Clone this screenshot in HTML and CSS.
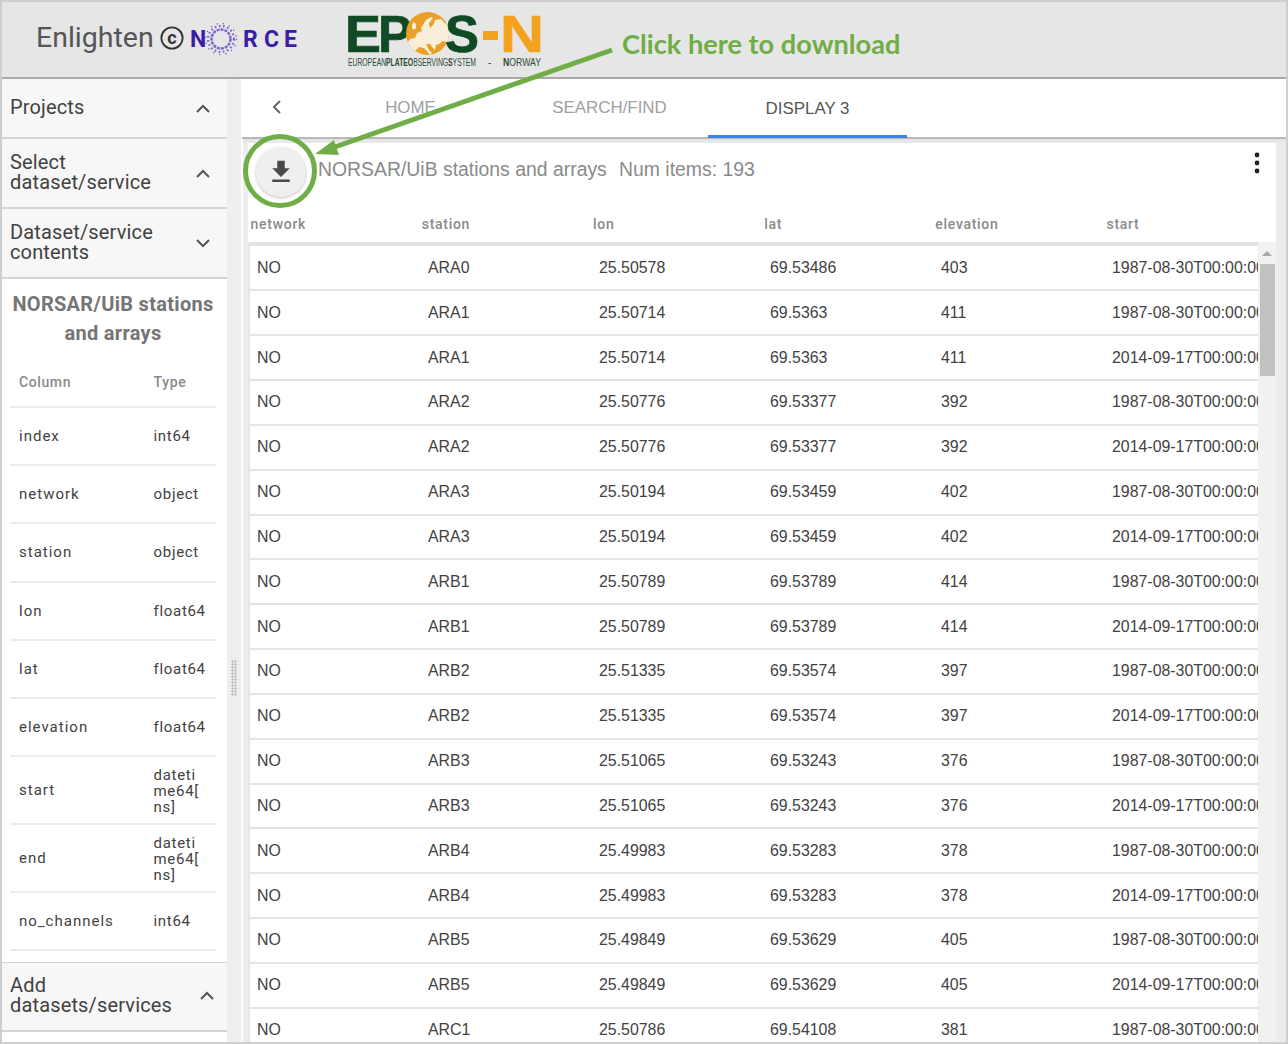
FILE: index.html
```html
<!DOCTYPE html>
<html lang="en">
<head>
<meta charset="utf-8">
<title>Enlighten</title>
<link rel="stylesheet" href="styles.css">
</head>
<body>
<div class="app">
  <header class="topbar">
    <span class="brand">Enlighten</span>
    <svg class="copy" viewBox="0 0 24 24" width="24" height="24"><circle cx="12" cy="12" r="10.6" fill="none" stroke="#333" stroke-width="1.8"/><text x="12" y="17.5" text-anchor="middle" class="copy-c">c</text></svg>
    <svg class="norce" viewBox="0 0 110 36" width="110" height="36">
      <text x="0" y="26" class="norce-l">N</text>
      <g fill="none" stroke="#7a5fc8">
        <circle cx="31" cy="18" r="9.5" stroke-width="2.4" stroke-dasharray="3 1"/>
        <circle cx="31" cy="18" r="13" stroke-width="2.2" stroke-dasharray="1.6 2.6"/>
        <circle cx="31" cy="18" r="15.5" stroke-width="1.4" stroke-dasharray="1.2 5"/>
      </g>
      <text x="53" y="26" class="norce-l">R</text>
      <text x="74" y="26" class="norce-l">C</text>
      <text x="94" y="26" class="norce-l">E</text>
    </svg>
    <svg class="epos" viewBox="0 0 196 60" width="196" height="60">
      <defs><clipPath id="disc"><circle cx="79.5" cy="23.5" r="21.5"/></clipPath></defs>
      <text x="-3" y="42" class="epos-g" textLength="36" lengthAdjust="spacingAndGlyphs">E</text>
      <text x="30" y="42" class="epos-g" textLength="34" lengthAdjust="spacingAndGlyphs">P</text>
      <circle cx="79.5" cy="23.5" r="21.5" fill="#e8a126"/>
      <g clip-path="url(#disc)" fill="#f8eeda">
        <path d="M58 35l4-6 5-1 2-5 5-2-1-3 5-8 5-3 2 1-4 5 1 5 4-4 1-4 6-1 6 6 3 8-1 10-6-2-4 3-3 1-1 5-3-3-2-3-4 0 3 6 3 3-2 2-6-7-5-1-4 4-6 3-4-1z"/>
        <ellipse cx="66" cy="16" rx="2" ry="3.5"/>
      </g>
      <text x="97" y="42" class="epos-g" textLength="34" lengthAdjust="spacingAndGlyphs">S</text>
      <rect x="135" y="21" width="15" height="9" fill="#f4a21e"/>
      <text x="152" y="42" class="epos-o" textLength="44" lengthAdjust="spacingAndGlyphs">N</text>
      <text x="0" y="56" class="epos-sub" textLength="128" lengthAdjust="spacingAndGlyphs">EUROPEAN<tspan class="epos-b">PLATEO</tspan>BSERVING<tspan class="epos-b">S</tspan>YSTEM</text>
      <text x="140" y="56" class="epos-sub">-</text>
      <text x="155" y="56" class="epos-sub" textLength="38" lengthAdjust="spacingAndGlyphs"><tspan class="epos-b">N</tspan>ORWAY</text>
    </svg>
  </header>

  <div class="body">
    <aside class="sidebar">
      <div class="panel panel-one">
        <span class="panel-title">Projects</span>
        <svg class="chev" viewBox="0 0 14 9" width="14" height="9"><path d="M1 8l6-6 6 6" fill="none" stroke="#555" stroke-width="2"/></svg>
      </div>
      <div class="panel">
        <span class="panel-title">Select<br>dataset/service</span>
        <svg class="chev" viewBox="0 0 14 9" width="14" height="9"><path d="M1 8l6-6 6 6" fill="none" stroke="#555" stroke-width="2"/></svg>
      </div>
      <div class="panel">
        <span class="panel-title">Dataset/service<br>contents</span>
        <svg class="chev" viewBox="0 0 14 9" width="14" height="9"><path d="M1 1l6 6 6-6" fill="none" stroke="#555" stroke-width="2"/></svg>
      </div>
      <section class="contents">
        <h2 class="contents-title">NORSAR/UiB stations and arrays</h2>
        <div class="col-row col-head"><span class="col-name">Column</span><span class="col-type">Type</span></div>
        <div class="col-row"><span class="col-name">index</span><span class="col-type">int64</span></div>
        <div class="col-row"><span class="col-name">network</span><span class="col-type">object</span></div>
        <div class="col-row"><span class="col-name">station</span><span class="col-type">object</span></div>
        <div class="col-row"><span class="col-name">lon</span><span class="col-type">float64</span></div>
        <div class="col-row"><span class="col-name">lat</span><span class="col-type">float64</span></div>
        <div class="col-row"><span class="col-name">elevation</span><span class="col-type">float64</span></div>
        <div class="col-row col-tall"><span class="col-name">start</span><span class="col-type">dateti<br>me64[<br>ns]</span></div>
        <div class="col-row col-tall"><span class="col-name">end</span><span class="col-type">dateti<br>me64[<br>ns]</span></div>
        <div class="col-row"><span class="col-name">no_channels</span><span class="col-type">int64</span></div>
      </section>
      <div class="panel panel-add">
        <span class="panel-title">Add<br>datasets/services</span>
        <svg class="chev" viewBox="0 0 14 9" width="14" height="9"><path d="M1 8l6-6 6 6" fill="none" stroke="#555" stroke-width="2"/></svg>
      </div>
      <div class="sidebar-rest"></div>
    </aside>

    <div class="gutter"><span class="grip"></span></div>

    <main class="main">
      <nav class="tabs">
        <svg class="tab-back" viewBox="0 0 10 14" width="10" height="14"><path d="M8 1L2 7l6 6" fill="none" stroke="#666" stroke-width="2"/></svg>
        <span class="tab">HOME</span>
        <span class="tab">SEARCH/FIND</span>
        <span class="tab tab-active">DISPLAY 3</span>
      </nav>
      <div class="stage">
        <div class="card">
          <div class="card-head">
            <button class="dl" type="button" aria-label="Download">
              <svg viewBox="0 0 24 24" width="30" height="30"><path d="M19 9h-4V3H9v6H5l7 7 7-7zM5 18v2h14v-2H5z" fill="#4a4a4a"/></svg>
            </button>
            <span class="card-title">NORSAR/UiB stations and arrays</span>
            <span class="card-count">Num items: 193</span>
            <svg class="more" viewBox="0 0 6 22" width="6" height="22"><circle cx="3" cy="3" r="2.4"/><circle cx="3" cy="11" r="2.4"/><circle cx="3" cy="19" r="2.4"/></svg>
          </div>
          <div class="thead"><span>network</span><span>station</span><span>lon</span><span>lat</span><span>elevation</span><span>start</span></div>
          <div class="tbody-wrap">
            <div class="tbody">
              <div class="tr"><span>NO</span><span>ARA0</span><span>25.50578</span><span>69.53486</span><span>403</span><span>1987-08-30T00:00:00</span></div>
              <div class="tr"><span>NO</span><span>ARA1</span><span>25.50714</span><span>69.5363</span><span>411</span><span>1987-08-30T00:00:00</span></div>
              <div class="tr"><span>NO</span><span>ARA1</span><span>25.50714</span><span>69.5363</span><span>411</span><span>2014-09-17T00:00:00</span></div>
              <div class="tr"><span>NO</span><span>ARA2</span><span>25.50776</span><span>69.53377</span><span>392</span><span>1987-08-30T00:00:00</span></div>
              <div class="tr"><span>NO</span><span>ARA2</span><span>25.50776</span><span>69.53377</span><span>392</span><span>2014-09-17T00:00:00</span></div>
              <div class="tr"><span>NO</span><span>ARA3</span><span>25.50194</span><span>69.53459</span><span>402</span><span>1987-08-30T00:00:00</span></div>
              <div class="tr"><span>NO</span><span>ARA3</span><span>25.50194</span><span>69.53459</span><span>402</span><span>2014-09-17T00:00:00</span></div>
              <div class="tr"><span>NO</span><span>ARB1</span><span>25.50789</span><span>69.53789</span><span>414</span><span>1987-08-30T00:00:00</span></div>
              <div class="tr"><span>NO</span><span>ARB1</span><span>25.50789</span><span>69.53789</span><span>414</span><span>2014-09-17T00:00:00</span></div>
              <div class="tr"><span>NO</span><span>ARB2</span><span>25.51335</span><span>69.53574</span><span>397</span><span>1987-08-30T00:00:00</span></div>
              <div class="tr"><span>NO</span><span>ARB2</span><span>25.51335</span><span>69.53574</span><span>397</span><span>2014-09-17T00:00:00</span></div>
              <div class="tr"><span>NO</span><span>ARB3</span><span>25.51065</span><span>69.53243</span><span>376</span><span>1987-08-30T00:00:00</span></div>
              <div class="tr"><span>NO</span><span>ARB3</span><span>25.51065</span><span>69.53243</span><span>376</span><span>2014-09-17T00:00:00</span></div>
              <div class="tr"><span>NO</span><span>ARB4</span><span>25.49983</span><span>69.53283</span><span>378</span><span>1987-08-30T00:00:00</span></div>
              <div class="tr"><span>NO</span><span>ARB4</span><span>25.49983</span><span>69.53283</span><span>378</span><span>2014-09-17T00:00:00</span></div>
              <div class="tr"><span>NO</span><span>ARB5</span><span>25.49849</span><span>69.53629</span><span>405</span><span>1987-08-30T00:00:00</span></div>
              <div class="tr"><span>NO</span><span>ARB5</span><span>25.49849</span><span>69.53629</span><span>405</span><span>2014-09-17T00:00:00</span></div>
              <div class="tr"><span>NO</span><span>ARC1</span><span>25.50786</span><span>69.54108</span><span>381</span><span>1987-08-30T00:00:00</span></div>
            </div>
            <div class="scrollbar"><span class="sb-up"></span><span class="sb-thumb"></span></div>
          </div>
        </div>
      </div>
    </main>
  </div>
</div>

<svg class="callout" viewBox="0 0 1288 1044" width="1288" height="1044" aria-hidden="true">
  <circle cx="280" cy="171" r="34.5" fill="none" stroke="#70ad47" stroke-width="5"/>
  <path d="M612 50L332 148" fill="none" stroke="#70ad47" stroke-width="5"/>
  <path d="M315 154l19-14 5 15z" fill="#70ad47"/>
</svg>
<div class="callout-text">Click here to download</div>
</body>
</html>
```
FILE: styles.css
```css
* { box-sizing: border-box; }
html, body { margin: 0; padding: 0; }
body { width: 1288px; height: 1044px; overflow: hidden; font-family: Roboto, "Liberation Sans", sans-serif; background: #fff; position: relative; }

.app { width: 1288px; height: 1044px; border: 2px solid #cfcfcf; display: flex; flex-direction: column; overflow: hidden; }

.topbar { height: 77px; flex: none; background: #e6e6e6; border-bottom: 2px solid #a9a9a9; display: flex; align-items: flex-start; padding-left: 34px; }
.brand { font-size: 28.5px; line-height: 32px; margin-top: 20px; color: #555; width: 124px; }
.copy { margin-top: 24px; flex: none; }
.copy-c { font: 700 18px Roboto, sans-serif; fill: #333; }
.norce { margin-top: 19px; margin-left: 6px; flex: none; }
.norce-l { font: 700 23px Roboto, sans-serif; fill: #3a1ca6; }
.epos { margin-top: 8px; margin-left: 48px; flex: none; overflow: visible; }
.epos-g { font: 700 52px "Liberation Sans", sans-serif; fill: #0f4a25; stroke: #0f4a25; stroke-width: .7px; }
.epos-o { font: 700 52px "Liberation Sans", sans-serif; fill: #f4a21e; stroke: #f4a21e; stroke-width: .7px; }
.epos-sub { font: 400 10px "Liberation Sans", sans-serif; fill: #2d4a35; }
.epos-b { font-weight: 700; }

.body { flex: 1; display: flex; min-height: 0; }

.sidebar { width: 225px; flex: none; display: flex; flex-direction: column; background: #fff; }
.panel { height: 70px; flex: none; background: #f7f7f7; border-bottom: 2px solid #d4d4d4; display: flex; align-items: center; justify-content: space-between; padding: 0 17px 0 8px; }
.panel-one { height: 60px; }
.panel-add { height: 70px; border-top: 1px solid #d4d4d4; padding-right: 13px; padding-bottom: 2px; }
.panel-title { font-size: 20px; line-height: 20px; color: #424242; letter-spacing: .15px; margin-top: -2px; }
.chev { flex: none; }

.contents { height: 683px; flex: none; padding: 11px 11px 0 8px; }
.contents-title { margin: 0 0 20px; font-size: 20px; line-height: 29px; font-weight: 700; color: #757575; text-align: center; letter-spacing: .3px; }
.col-row { display: flex; align-items: center; min-height: 58.2px; border-bottom: 2px solid #ececec; font-size: 15px; line-height: 16px; color: #424242; letter-spacing: 1px; padding-left: 9px; }
.col-head { min-height: 40px; padding-bottom: 10px; font-size: 14px; color: #8a8a8a; font-weight: 500; letter-spacing: .6px; }
.col-tall { min-height: 68px; }
.col-tall .col-type { padding-top: 1px; }
.col-name { width: 134.5px; flex: none; }
.col-type { width: 54px; flex: none; letter-spacing: .7px; white-space: nowrap; }
.sidebar-rest { flex: 1; background: #fff; }

.gutter { width: 14px; flex: none; background: #eee; display: flex; justify-content: center; align-items: flex-start; }
.grip { width: 6px; height: 36px; margin-top: 581px; background-image: radial-gradient(circle, #c4c4c4 1px, transparent 1.3px); background-size: 3px 3px; }

.main { flex: 1; min-width: 0; display: flex; flex-direction: column; background: #fff; }
.tabs { height: 60px; flex: none; display: flex; align-items: stretch; border-bottom: 2px solid #b9b9b9; margin-left: 1px; padding-left: 30px; }
.tab-back { align-self: center; margin-right: 29px; margin-bottom: 2px; }
.tab { width: 199px; flex: none; display: flex; align-items: center; justify-content: center; font: 400 16.9px "Liberation Sans", sans-serif; color: #a0a0a0; }
.tab-active { color: #555; border-bottom: 3px solid #3d80e6; padding-top: 3px; margin-bottom: -1px; margin-left: -1px; }

.stage { flex: 1; min-height: 0; margin-left: 2px; background: linear-gradient(#e3e3e3, #ececec 5px); padding: 4px 10px 0 5px; }
.card { height: 100%; background: #fff; display: flex; flex-direction: column; overflow: hidden; }
.card-head { height: 62px; flex: none; display: flex; align-items: flex-start; position: relative; padding-top: 4px; }
.dl { width: 50px; height: 50px; flex: none; margin: 0 12.5px 0 7.5px; padding: 0; border: 0; border-radius: 50%; background: #efefef; box-shadow: 0 1px 3px rgba(0,0,0,.25); display: flex; align-items: center; justify-content: center; }
.card-title { font: 400 19.4px/24px "Liberation Sans", sans-serif; margin-top: 10px; color: #8a8a8a; width: 301px; flex: none; }
.card-count { font: 400 19.4px/24px "Liberation Sans", sans-serif; margin-top: 10px; color: #8a8a8a; }
.more { position: absolute; left: 1006px; top: 9px; fill: #222; }

.thead { height: 37px; flex: none; display: grid; grid-template-columns: repeat(5, 171.2px) 1fr; align-items: center; padding: 0 0 0 2.6px; font-size: 14px; font-weight: 500; color: #8a8a8a; letter-spacing: .7px; }
.tbody-wrap { flex: 1; min-height: 0; display: flex; background: #e6e6e6; padding-left: 2px; }
.tbody { width: 1008px; flex: none; overflow: hidden; background: #fff; border-top: 4px solid #e3e3e3; padding-top: .6px; }
.tr { height: 44.83px; display: grid; grid-template-columns: repeat(5, 171px) 1fr; align-items: center; padding-left: 7px; border-bottom: 2.5px solid #e4e4e4; font: 400 15.9px "Liberation Sans", sans-serif; color: #424242; white-space: nowrap; }
.tr span { overflow: hidden; }
.scrollbar { width: 18px; flex: none; background: #f1f1f1; display: flex; flex-direction: column; align-items: center; }
.sb-up { width: 0; height: 0; margin: 9px 0 8px; border: 5px solid transparent; border-top: 0; border-bottom: 5px solid #a8a8a8; }
.sb-thumb { width: 15px; height: 112px; background: #c1c1c1; margin-left: 1px; }

.callout { position: absolute; left: 0; top: 0; pointer-events: none; }
.callout-text { position: absolute; left: 622px; top: 26px; font: 700 27.2px/36px Lato, sans-serif; color: #70ad47; white-space: nowrap; }
```
